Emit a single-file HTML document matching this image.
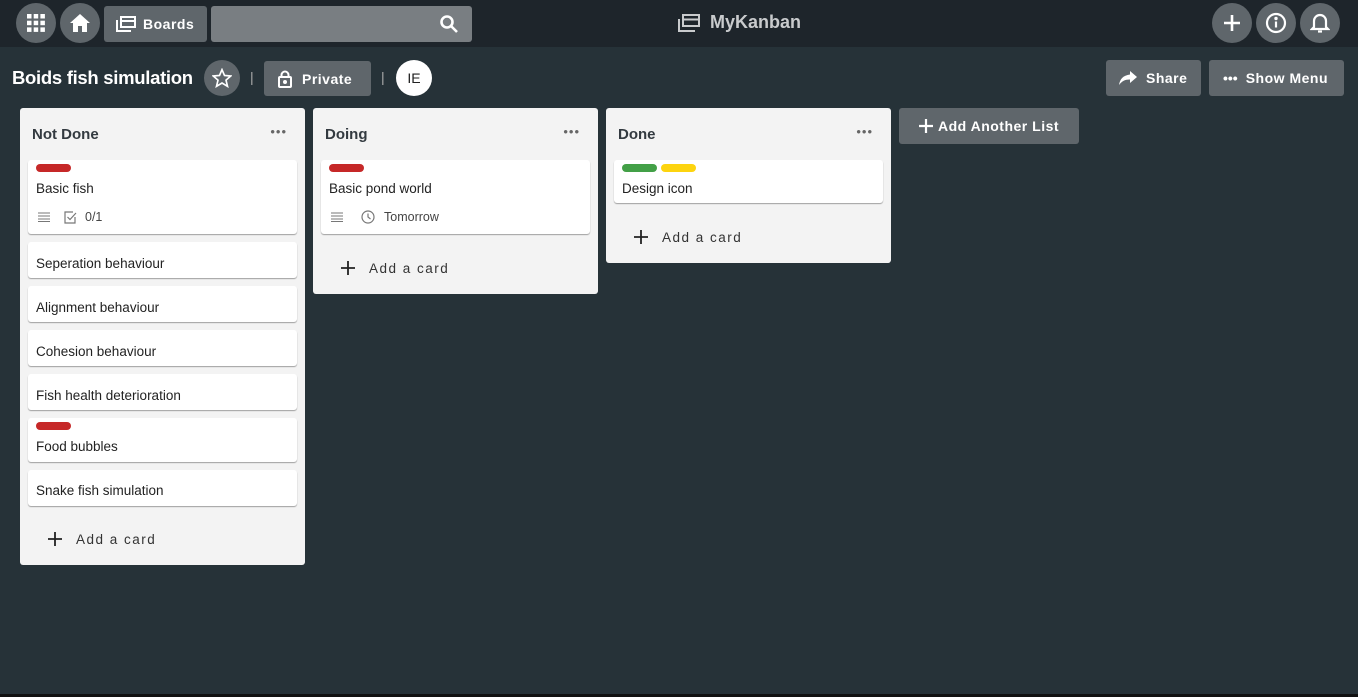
<!DOCTYPE html>
<html><head><meta charset="utf-8"><style>
*{box-sizing:border-box;margin:0;padding:0}
body{width:1358px;height:697px;background:#263238;font-family:"Liberation Sans","DejaVu Sans",sans-serif;position:relative;overflow:hidden}
.a{position:absolute}
.top{left:0;top:0;width:1358px;height:47px;background:#1e252b}
.circ{border-radius:50%;background:#5f666b;display:flex;align-items:center;justify-content:center}
.btn{background:#5f666b;border-radius:3px;color:#fff;font-weight:bold;font-size:14px;display:flex;align-items:center;letter-spacing:.5px}
.list{background:#f3f3f3;border-radius:3px;width:285px}
.lh{position:absolute;left:12px;top:18px;font-size:15px;font-weight:bold;color:#333a40}
.dots{position:absolute;right:18px;top:16px;font-size:13px;color:#666;letter-spacing:1px}
.card{position:absolute;left:8px;width:269px;background:#fff;border-radius:3px;box-shadow:0 1px 1px rgba(0,0,0,.35);font-size:13.5px;color:#222}
.card .t{position:absolute;left:8px}
.lab{position:absolute;top:4px;width:35px;height:8px;border-radius:4px}
.add{position:absolute;font-size:13.5px;color:#333;letter-spacing:1.5px}
.add svg{position:absolute;left:-28px;top:0}
.ft{position:absolute;top:50px;font-size:12.5px;color:#444;display:flex;align-items:center}
</style></head><body>
<div class="a top"></div>
<div class="a circ" style="left:16px;top:3px;width:40px;height:40px"><svg width="18" height="18" viewBox="0 0 18 18" fill="#fff"><rect x="0" y="0" width="4.5" height="4.5"/><rect x="6.7" y="0" width="4.5" height="4.5"/><rect x="13.4" y="0" width="4.5" height="4.5"/><rect x="0" y="6.7" width="4.5" height="4.5"/><rect x="6.7" y="6.7" width="4.5" height="4.5"/><rect x="13.4" y="6.7" width="4.5" height="4.5"/><rect x="0" y="13.4" width="4.5" height="4.5"/><rect x="6.7" y="13.4" width="4.5" height="4.5"/><rect x="13.4" y="13.4" width="4.5" height="4.5"/></svg></div>
<div class="a circ" style="left:60px;top:3px;width:40px;height:40px"><svg width="20" height="18" viewBox="0 0 20 18" fill="#fff"><path d="M10 0L0 9h3v9h5v-6h4v6h5V9h3z"/></svg></div>
<div class="a btn" style="left:104px;top:6px;width:103px;height:36px;padding-left:12px"><svg width="20" height="16" viewBox="0 0 20 16" fill="none" stroke="#fff" stroke-width="2"><path d="M1 4v11h14"/><rect x="5" y="1" width="14" height="10"/><path d="M5 5h14"/></svg><span style="margin-left:7px;font-size:14px">Boards</span></div>
<div class="a" style="left:211px;top:6px;width:261px;height:36px;background:#797e82;border-radius:3px"><svg class="a" style="left:228px;top:8px" width="20" height="20" viewBox="0 0 20 20" fill="none" stroke="#fff" stroke-width="2.6"><circle cx="8" cy="8" r="5.5"/><path d="M12 12l6 6"/></svg></div>
<div class="a" style="left:678px;top:12px;display:flex;align-items:center;color:#c9cbcd;font-weight:bold;font-size:18px"><svg width="22" height="18" viewBox="0 0 22 18" fill="none" stroke="#c9cbcd" stroke-width="2"><path d="M1 5v12h16"/><rect x="5" y="1" width="16" height="11"/><path d="M5 5.5h16"/></svg><span style="margin-left:10px">MyKanban</span></div>
<div class="a circ" style="left:1212px;top:3px;width:40px;height:40px"><svg width="18" height="18"><path d="M9 1v16M1 9h16" stroke="#fff" stroke-width="2.6"/></svg></div>
<div class="a circ" style="left:1256px;top:3px;width:40px;height:40px"><svg width="22" height="22" viewBox="0 0 22 22" fill="none" stroke="#fff" stroke-width="2.2"><circle cx="11" cy="11" r="9"/><path d="M11 9.5v6"/><circle cx="11" cy="6.5" r=".6" fill="#fff"/></svg></div>
<div class="a circ" style="left:1300px;top:3px;width:40px;height:40px"><svg width="20" height="22" viewBox="0 0 20 22" fill="none" stroke="#fff" stroke-width="2.2"><path d="M4 15V9a6 6 0 0 1 12 0v6l2 2H2z"/><path d="M8 19.5h4"/></svg></div>

<div class="a" style="left:12px;top:67px;color:#fff;font-weight:bold;font-size:18.5px;letter-spacing:-.3px">Boids fish simulation</div>
<div class="a circ" style="left:204px;top:60px;width:36px;height:36px"><svg width="20" height="20" viewBox="0 0 24 24" fill="none" stroke="#fff" stroke-width="2"><path d="M12 2l3 7 7.5.6-5.7 5 1.8 7.4L12 18l-6.6 4 1.8-7.4-5.7-5L9 9z"/></svg></div>
<div class="a" style="left:250px;top:69px;color:#aaa;font-size:14px">|</div>
<div class="a btn" style="left:264px;top:61px;width:107px;height:35px;padding-left:14px"><svg width="14" height="18" viewBox="0 0 14 18" fill="none" stroke="#fff" stroke-width="2"><rect x="1" y="7" width="12" height="10" rx="1"/><path d="M3.5 7V5a3.5 3.5 0 0 1 7 0v2"/><circle cx="7" cy="12" r="1" fill="#fff"/></svg><span style="margin-left:10px">Private</span></div>
<div class="a" style="left:381px;top:69px;color:#aaa;font-size:14px">|</div>
<div class="a circ" style="left:396px;top:60px;width:36px;height:36px;background:#fff;color:#222;font-size:14px">IE</div>
<div class="a btn" style="left:1106px;top:60px;width:95px;height:36px;padding-left:13px"><svg width="18" height="14" viewBox="0 0 18 14" fill="#fff"><path d="M11 0l7 6-7 6V8.5C6 8.5 3 10 0 14c1-6 4-9.5 11-10.5z"/></svg><span style="margin-left:9px">Share</span></div>
<div class="a btn" style="left:1209px;top:60px;width:135px;height:36px;padding-left:14px"><span style="font-size:14px;letter-spacing:0">•••</span><span style="margin-left:8px">Show Menu</span></div>

<div class="a list" style="left:20px;top:108px;height:457px">
<div class="lh">Not Done</div><div class="dots">•••</div>
<div class="card" style="top:52px;height:74px"><div class="lab" style="left:8px;background:#c62828"></div><div class="t" style="top:21px">Basic fish</div>
<div class="ft" style="left:10px"><svg width="12" height="10"><path d="M0 1h12M0 4h12M0 7h12M0 9.5h12" stroke="#777" stroke-width="1"/></svg><svg style="margin-left:14px" width="13" height="13" viewBox="0 0 13 13" fill="none" stroke="#777" stroke-width="1.2"><path d="M11 6v6H1V1h8"/><path d="M3.5 6l2.5 2.5L12 2"/></svg><span style="margin-left:8px">0/1</span></div></div>
<div class="card" style="top:134px;height:36px"><div class="t" style="top:14px">Seperation behaviour</div></div>
<div class="card" style="top:178px;height:36px"><div class="t" style="top:14px">Alignment behaviour</div></div>
<div class="card" style="top:222px;height:36px"><div class="t" style="top:14px">Cohesion behaviour</div></div>
<div class="card" style="top:266px;height:36px"><div class="t" style="top:14px">Fish health deterioration</div></div>
<div class="card" style="top:310px;height:44px"><div class="lab" style="left:8px;background:#c62828"></div><div class="t" style="top:21px">Food bubbles</div></div>
<div class="card" style="top:362px;height:36px"><div class="t" style="top:13px">Snake fish simulation</div></div>
<div class="add" style="left:56px;top:424px"><svg width="14" height="14"><path d="M7 0v14M0 7h14" stroke="#222" stroke-width="1.8"/></svg>Add a card</div>
</div>

<div class="a list" style="left:313px;top:108px;height:186px">
<div class="lh">Doing</div><div class="dots">•••</div>
<div class="card" style="top:52px;height:74px"><div class="lab" style="left:8px;background:#c62828"></div><div class="t" style="top:21px">Basic pond world</div>
<div class="ft" style="left:10px"><svg width="12" height="10"><path d="M0 1h12M0 4h12M0 7h12M0 9.5h12" stroke="#777" stroke-width="1"/></svg><svg style="margin-left:18px" width="14" height="14" viewBox="0 0 14 14" fill="none" stroke="#777" stroke-width="1.2"><circle cx="7" cy="7" r="6"/><path d="M7 3.5V7l2.5 2"/></svg><span style="margin-left:9px">Tomorrow</span></div></div>
<div class="add" style="left:56px;top:153px"><svg width="14" height="14"><path d="M7 0v14M0 7h14" stroke="#222" stroke-width="1.8"/></svg>Add a card</div>
</div>

<div class="a list" style="left:606px;top:108px;height:155px">
<div class="lh">Done</div><div class="dots">•••</div>
<div class="card" style="top:52px;height:43px"><div class="lab" style="left:8px;background:#43a047"></div><div class="lab" style="left:47px;background:#fdd40f"></div><div class="t" style="top:21px">Design icon</div></div>
<div class="add" style="left:56px;top:122px"><svg width="14" height="14"><path d="M7 0v14M0 7h14" stroke="#222" stroke-width="1.8"/></svg>Add a card</div>
</div>

<div class="a btn" style="left:899px;top:108px;width:180px;height:36px;padding-left:20px;font-size:14px"><svg width="14" height="14" style="margin-right:5px"><path d="M7 0v14M0 7h14" stroke="#fff" stroke-width="2.2"/></svg>Add Another List</div>
<div class="a" style="left:0;top:694px;width:1358px;height:3px;background:#111"></div>
</body></html>
